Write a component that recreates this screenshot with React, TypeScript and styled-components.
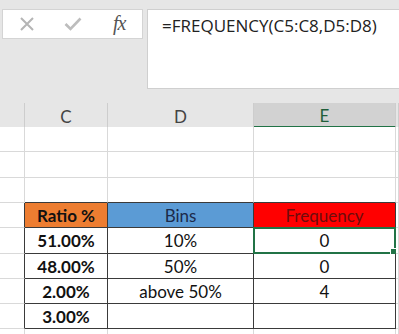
import React from "react";
import styled, { createGlobalStyle, css } from "styled-components";

const GlobalStyle = createGlobalStyle`
  html, body { margin: 0; padding: 0; }
  body { background: #e6e6e6; font-family: "Lato", "Open Sans", sans-serif; }
`;

const Root = styled.div`
  width: 399px;
  height: 334px;
  overflow: hidden;
  background: #e6e6e6;
  display: flex;
  flex-direction: column;
`;

const FormulaBar = styled.div`
  flex-shrink: 0;
  display: flex;
  align-items: flex-start;
  gap: 4px;
  padding: 9px 0 0 2px;
  height: 103px;
  box-sizing: border-box;
`;

const NameBox = styled.div`
  width: 141px;
  height: 30px;
  box-sizing: border-box;
  background: #ffffff;
  border: 1px solid #d4d4d4;
  display: flex;
  align-items: center;
`;

const IconSlot = styled.div<{ $w: number }>`
  width: ${(p) => p.$w}px;
  display: flex;
  justify-content: center;
  align-items: center;
`;

const Fx = styled.span`
  font-family: "Liberation Serif", "DejaVu Serif", serif;
  font-style: italic;
  font-size: 20px;
  color: #555;
  letter-spacing: -1px;
  line-height: 1;
  margin-top: -2px;
`;

const FormulaInput = styled.div`
  flex: 1;
  height: 80px;
  box-sizing: border-box;
  background: #ffffff;
  border: 1px solid #cfcfcf;
  border-right: none;
  padding: 4px 0 0 14px;
  font-family: "Open Sans", "Lato", sans-serif;
  font-size: 17px;
  color: #222;
`;

const Sheet = styled.div`
  flex-shrink: 0;
  display: flex;
  flex-direction: column;
`;

const Row = styled.div<{ $h: number }>`
  flex-shrink: 0;
  display: grid;
  grid-template-columns: 25px 83px 146px 142px 1fr;
  height: ${(p) => p.$h}px;
`;

type CellProps = {
  $bg?: string;
  $color?: string;
  $bold?: boolean;
  $darkRight?: boolean;
  $darkBottom?: boolean;
  $head?: boolean;
  $selHead?: boolean;
};

const Cell = styled.div<CellProps>`
  position: relative;
  box-sizing: border-box;
  display: flex;
  align-items: center;
  justify-content: center;
  background: ${(p) => p.$bg || "#ffffff"};
  color: ${(p) => p.$color || "#111"};
  font-weight: ${(p) => (p.$bold ? 700 : 400)};
  font-size: 17px;
  border-right: 1px solid ${(p) => (p.$darkRight ? "#3a3a3a" : "#d9d9d9")};
  border-bottom: 1px solid ${(p) => (p.$darkBottom ? "#3a3a3a" : "#d9d9d9")};
  ${(p) =>
    p.$head &&
    css`
      background: #e6e6e6;
      color: #444;
      border-right: 1px solid #cdcdcd;
      border-bottom: 1px solid #9e9e9e;
      padding-top: 2px;
    `}
  ${(p) =>
    p.$selHead &&
    css`
      background: #d2d2d2;
      color: #1f5e3a;
      border-bottom: 2px solid #217346;
    `}
`;

const Selection = styled.div`
  position: absolute;
  left: -1px;
  top: -1px;
  right: -1px;
  bottom: -1px;
  border: 2px solid #217346;
  pointer-events: none;
`;

const FillHandle = styled.div`
  position: absolute;
  right: -4px;
  bottom: -4px;
  width: 6px;
  height: 6px;
  background: #217346;
  border: 1px solid #fff;
`;

const CloseIcon = () => (
  <svg width="16" height="16" viewBox="0 0 16 16">
    <path d="M2 2 L14 14 M14 2 L2 14" stroke="#b5b5b5" strokeWidth="2" fill="none" />
  </svg>
);

const CheckIcon = () => (
  <svg width="18" height="14" viewBox="0 0 18 14">
    <path d="M1.5 7 L6.5 12 L16.5 1.5" stroke="#bdbdbd" strokeWidth="2.6" fill="none" />
  </svg>
);

const rows = [
  { ratio: "51.00%", bin: "10%", freq: "0", h: 26, selected: true },
  { ratio: "48.00%", bin: "50%", freq: "0", h: 25 },
  { ratio: "2.00%", bin: "above 50%", freq: "4", h: 25 },
  { ratio: "3.00%", bin: "", freq: "", h: 25 },
];

export default function App() {
  return (
    <Root>
      <GlobalStyle />
      <FormulaBar>
        <NameBox>
          <IconSlot $w={48}>
            <CloseIcon />
          </IconSlot>
          <IconSlot $w={46}>
            <CheckIcon />
          </IconSlot>
          <IconSlot $w={46}>
            <Fx>fx</Fx>
          </IconSlot>
        </NameBox>
        <FormulaInput>=FREQUENCY(C5:C8,D5:D8)</FormulaInput>
      </FormulaBar>
      <Sheet>
        <Row $h={24}>
          <Cell $head />
          <Cell $head>C</Cell>
          <Cell $head>D</Cell>
          <Cell $head $selHead>E</Cell>
          <Cell $head />
        </Row>
        <Row $h={25}>
          <Cell />
          <Cell />
          <Cell />
          <Cell />
          <Cell />
        </Row>
        <Row $h={26}>
          <Cell />
          <Cell />
          <Cell />
          <Cell />
          <Cell />
        </Row>
        <Row $h={25}>
          <Cell />
          <Cell $darkBottom />
          <Cell $darkBottom />
          <Cell $darkBottom />
          <Cell />
        </Row>
        <Row $h={25}>
          <Cell $darkRight />
          <Cell $bg="#ed7d31" $bold $darkRight $darkBottom>
            Ratio %
          </Cell>
          <Cell $bg="#5b9bd5" $color="#1c2a4a" $darkRight $darkBottom>
            Bins
          </Cell>
          <Cell $bg="#ff0000" $color="#6e0c0c" $darkRight $darkBottom>
            Frequency
          </Cell>
          <Cell />
        </Row>
        {rows.map((r, i) => (
          <Row key={i} $h={r.h}>
            <Cell $darkRight />
            <Cell $bold $darkRight $darkBottom>
              {r.ratio}
            </Cell>
            <Cell $darkRight $darkBottom>
              {r.bin}
            </Cell>
            <Cell $darkRight $darkBottom={i !== 0}>
              {r.freq}
              {r.selected && (
                <Selection>
                  <FillHandle />
                </Selection>
              )}
            </Cell>
            <Cell />
          </Row>
        ))}
        <Row $h={10}>
          <Cell />
          <Cell />
          <Cell />
          <Cell />
          <Cell />
        </Row>
      </Sheet>
    </Root>
  );
}
